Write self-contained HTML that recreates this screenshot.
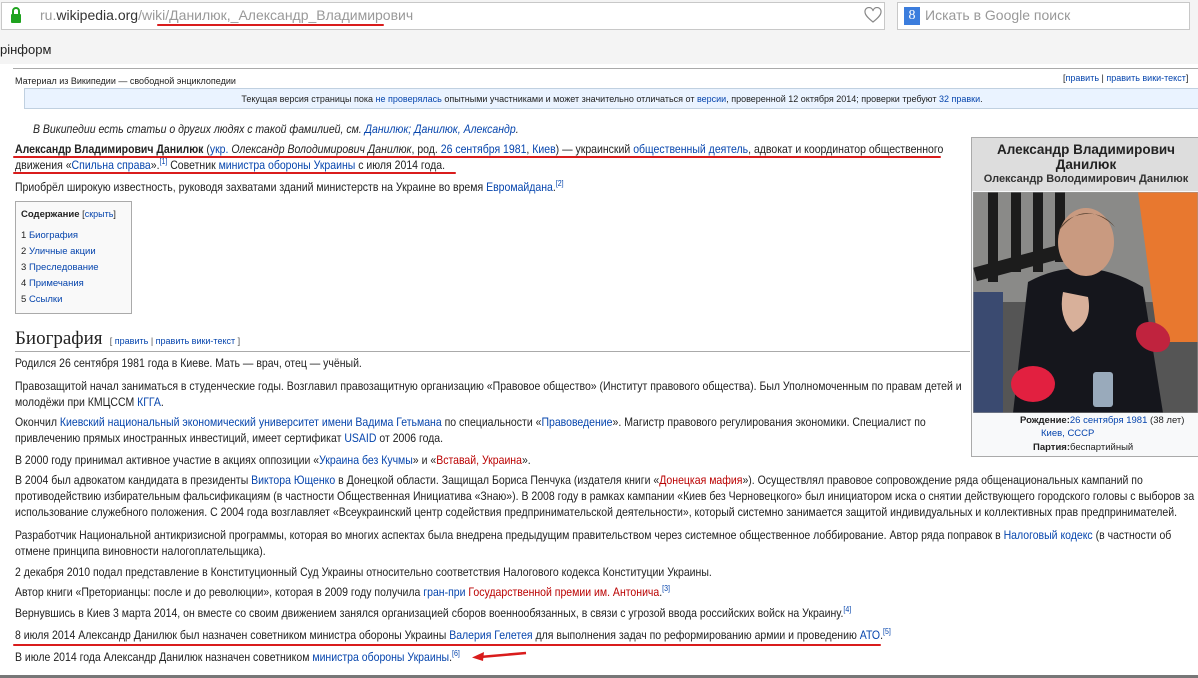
<!DOCTYPE html>
<html><head><meta charset="utf-8"><style>
*{margin:0;padding:0;box-sizing:border-box}
body{width:1198px;height:678px;overflow:hidden;background:#fff;font-family:"Liberation Sans",Arial,sans-serif;color:#222;position:relative}
.a{position:absolute;white-space:nowrap}
a,.l{color:#0645ad;text-decoration:none}
.r{color:#ba0000}
p.a{font-size:12px;line-height:16px;transform:scaleX(0.875);transform-origin:0 0}
sup{font-size:8px;vertical-align:5px;line-height:0}
.red{position:absolute;background:#d91c1c;height:2px;border-radius:1px}
.s{font-size:9px;color:#222}
</style></head><body>
<!-- browser chrome -->
<div class="a" style="left:0;top:0;width:1198px;height:33px;background:#f4f4f4"></div>
<div class="a" style="left:1px;top:2px;width:884px;height:28px;background:#fff;border:1px solid #c8c8c8"></div>
<svg class="a" style="left:10px;top:6px" width="12" height="18" viewBox="0 0 12 18"><path d="M3 8V5a3 3 0 0 1 6 0v3" fill="none" stroke="#1fa31f" stroke-width="2"/><rect x="1" y="8" width="10" height="9" rx="1" fill="#1fa31f"/></svg>
<div class="a" style="left:40px;top:7px;font-size:14px;color:#999">ru.<span style="color:#333">wikipedia.org</span>/wiki/Данилюк,_Александр_Владимирович</div>
<div class="red" style="left:157px;top:24px;width:227px"></div>
<svg class="a" style="left:864px;top:7px" width="18" height="16" viewBox="0 0 18 16"><path d="M9 15C4 11 1 8 1 5a4 4 0 0 1 8-1 4 4 0 0 1 8 1c0 3-3 6-8 10z" fill="none" stroke="#888" stroke-width="1.2"/></svg>
<div class="a" style="left:897px;top:2px;width:293px;height:28px;background:#fff;border:1px solid #c8c8c8"></div>
<div class="a" style="left:904px;top:7px;width:16px;height:18px;background:#3b7ddd;color:#fff;font-size:14px;text-align:center;line-height:18px;font-family:'Liberation Serif',serif">8</div>
<div class="a" style="left:925px;top:7px;font-size:14px;color:#999">Искать в Google поиск</div>
<div class="a" style="left:0;top:33px;width:1198px;height:33px;background:#f4f4f4"></div>
<div class="a" style="left:0;top:42px;font-size:13px;color:#222">рінформ</div>
<div class="a" style="left:0;top:64px;width:1198px;height:3px;background:#fff"></div>
<div class="a" style="left:13px;top:68px;width:1185px;height:1px;background:#aaa"></div>
<!-- page -->
<div class="a s" style="left:15px;top:76px">Материал из Википедии — свободной энциклопедии</div>
<div class="a s" style="left:1063px;top:73px">[<a>править</a> | <a>править вики-текст</a>]</div>
<div class="a" style="left:24px;top:88px;width:1176px;height:21px;background:#eaf3ff;border:1px solid #c0d0e0"></div>
<div class="a s" style="left:24px;top:94px;width:1176px;text-align:center">Текущая версия страницы пока <a>не проверялась</a> опытными участниками и может значительно отличаться от <a>версии</a>, проверенной 12 октября 2014; проверки требуют <a>32 правки</a>.</div>
<p class="a" style="left:33px;top:121px;font-style:italic">В Википедии есть статьи о других людях с такой фамилией, см. <a>Данилюк; Данилюк, Александр</a>.</p>
<p class="a" style="left:15px;top:141px"><b>Александр Владимирович Данилюк</b> (<a>укр.</a> <i>Олександр Володимирович Данилюк</i>, род. <a>26 сентября</a> <a>1981</a>, <a>Киев</a>) — украинский <a>общественный деятель</a>, адвокат и координатор общественного</p>
<p class="a" style="left:15px;top:157px">движения «<a>Спильна справа</a>».<sup><a>[1]</a></sup> Советник <a>министра обороны Украины</a> с июля 2014 года.</p>
<div class="red" style="left:13px;top:156px;width:928px"></div>
<div class="red" style="left:13px;top:172px;width:443px"></div>
<p class="a" style="left:15px;top:179px">Приобрёл широкую известность, руководя захватами зданий министерств на Украине во время <a>Евромайдана</a>.<sup><a>[2]</a></sup></p>
<!-- TOC -->
<div class="a" style="left:15px;top:201px;width:117px;height:113px;background:#f9f9f9;border:1px solid #aaa"></div>
<div class="a" style="left:21px;top:209px;font-size:9.5px"><b>Содержание</b> <span class="s">[<a>скрыть</a>]</span></div>
<div class="a" style="left:21px;top:228px;font-size:9.5px;line-height:16px">1 <a>Биография</a><br>2 <a>Уличные акции</a><br>3 <a>Преследование</a><br>4 <a>Примечания</a><br>5 <a>Ссылки</a></div>
<div class="a" style="left:15px;top:328px;font-family:'Liberation Serif',serif;font-size:19px">Биография <span style="font-family:'Liberation Sans',sans-serif;font-size:9px;color:#555">&nbsp;[ <a>править</a> | <a>править вики-текст</a> ]</span></div>
<div class="a" style="left:15px;top:351px;width:955px;height:1px;background:#aaa"></div>
<p class="a" style="left:15px;top:355px">Родился 26 сентября 1981 года в Киеве. Мать — врач, отец — учёный.</p>
<p class="a" style="left:15px;top:378px">Правозащитой начал заниматься в студенческие годы. Возглавил правозащитную организацию «Правовое общество» (Институт правового общества). Был Уполномоченным по правам детей и<br>молодёжи при КМЦССМ <a>КГГА</a>.</p>
<p class="a" style="left:15px;top:414px">Окончил <a>Киевский национальный экономический университет имени Вадима Гетьмана</a> по специальности «<a>Правоведение</a>». Магистр правового регулирования экономики. Специалист по<br>привлечению прямых иностранных инвестиций, имеет сертификат <a>USAID</a> от 2006 года.</p>
<p class="a" style="left:15px;top:452px">В 2000 году принимал активное участие в акциях оппозиции «<a>Украина без Кучмы</a>» и «<span class="r">Вставай, Украина</span>».</p>
<p class="a" style="left:15px;top:472px">В 2004 был адвокатом кандидата в президенты <a>Виктора Ющенко</a> в Донецкой области. Защищал Бориса Пенчука (издателя книги «<span class="r">Донецкая мафия</span>»). Осуществлял правовое сопровождение ряда общенациональных кампаний по<br>противодействию избирательным фальсификациям (в частности Общественная Инициатива «Знаю»). В 2008 году в рамках кампании «Киев без Черновецкого» был инициатором иска о снятии действующего городского головы с выборов за<br>использование служебного положения. С 2004 года возглавляет «Всеукраинский центр содействия предпринимательской деятельности», который системно занимается защитой индивидуальных и коллективных прав предпринимателей.</p>
<p class="a" style="left:15px;top:527px">Разработчик Национальной антикризисной программы, которая во многих аспектах была внедрена предыдущим правительством через системное общественное лоббирование. Автор ряда поправок в <a>Налоговый кодекс</a> (в частности об<br>отмене принципа виновности налогоплательщика).</p>
<p class="a" style="left:15px;top:564px">2 декабря 2010 подал представление в Конституционный Суд Украины относительно соответствия Налогового кодекса Конституции Украины.</p>
<p class="a" style="left:15px;top:584px">Автор книги «Преторианцы: после и до революции», которая в 2009 году получила <a>гран-при</a> <span class="r">Государственной премии им. Антонича</span>.<sup><a>[3]</a></sup></p>
<p class="a" style="left:15px;top:605px">Вернувшись в Киев 3 марта 2014, он вместе со своим движением занялся организацией сборов военнообязанных, в связи с угрозой ввода российских войск на Украину.<sup><a>[4]</a></sup></p>
<p class="a" style="left:15px;top:627px">8 июля 2014 Александр Данилюк был назначен советником министра обороны Украины <a>Валерия Гелетея</a> для выполнения задач по реформированию армии и проведению <a>АТО</a>.<sup><a>[5]</a></sup></p>
<div class="red" style="left:13px;top:644px;width:868px"></div>
<p class="a" style="left:15px;top:649px">В июле 2014 года Александр Данилюк назначен советником <a>министра обороны Украины</a>.<sup><a>[6]</a></sup></p>
<svg class="a" style="left:470px;top:649px" width="58" height="14" viewBox="0 0 58 14"><path d="M56 4L10 8" stroke="#d91c1c" stroke-width="2.5" fill="none"/><path d="M2 8.5L14 3L13 12Z" fill="#d91c1c"/></svg>
<div class="a" style="left:0;top:675px;width:1198px;height:3px;background:#777"></div>
<!-- infobox -->
<div class="a" style="left:971px;top:137px;width:230px;height:320px;background:#f8f9fa;border:1px solid #aaa"></div>
<div class="a" style="left:972px;top:138px;width:228px;height:53px;background:#ddd"></div>
<div class="a" style="left:972px;top:142px;width:228px;text-align:center;font-size:13.5px;font-weight:bold;line-height:15px;white-space:normal">Александр Владимирович<br>Данилюк</div>
<div class="a" style="left:972px;top:173px;width:228px;text-align:center;font-size:11px;font-weight:bold;color:#333">Олександр Володимирович Данилюк</div>
<svg class="a" style="left:973px;top:192px" width="225" height="221" viewBox="0 0 225 221">
<rect width="225" height="221" fill="#555"/>
<rect width="225" height="110" fill="#8a8a88"/>
<g fill="#1c1c1c"><rect x="15" y="0" width="10" height="90"/><rect x="38" y="0" width="10" height="80"/><rect x="60" y="0" width="10" height="80"/><rect x="82" y="0" width="10" height="70"/><rect x="0" y="60" width="120" height="14" transform="rotate(-15 60 67)"/></g>
<path d="M165 0h60v150h-40z" fill="#e8782f"/>
<path d="M55 90 Q110 60 170 95 L190 221 H40Z" fill="#15161c"/>
<ellipse cx="113" cy="50" rx="28" ry="34" fill="#c99a80"/>
<path d="M85 40 Q110 5 142 35 Q130 20 112 22 Q92 24 85 40Z" fill="#5a4433"/>
<path d="M90 100 Q85 125 100 140 Q120 130 115 105Z" fill="#d8b09a"/>
<rect x="0" y="100" width="30" height="121" fill="#3a4a70"/>
<ellipse cx="60" cy="192" rx="22" ry="18" fill="#e22040"/>
<ellipse cx="180" cy="145" rx="18" ry="14" fill="#c0233e" transform="rotate(30 180 145)"/>
<rect x="120" y="180" width="20" height="35" fill="#9ab" rx="3"/>
<rect x="0" y="0" width="225" height="221" fill="none" stroke="#999"/>
</svg>
<div class="a" style="left:1020px;top:414px;font-size:9.5px;line-height:14px"><b>Рождение:</b><a>26 сентября 1981</a> (38 лет)</div>
<div class="a" style="left:1041px;top:428px;font-size:9.5px"><a>Киев, СССР</a></div>
<div class="a" style="left:1033px;top:442px;font-size:9.5px"><b>Партия:</b>беспартийный</div>
</body></html>
